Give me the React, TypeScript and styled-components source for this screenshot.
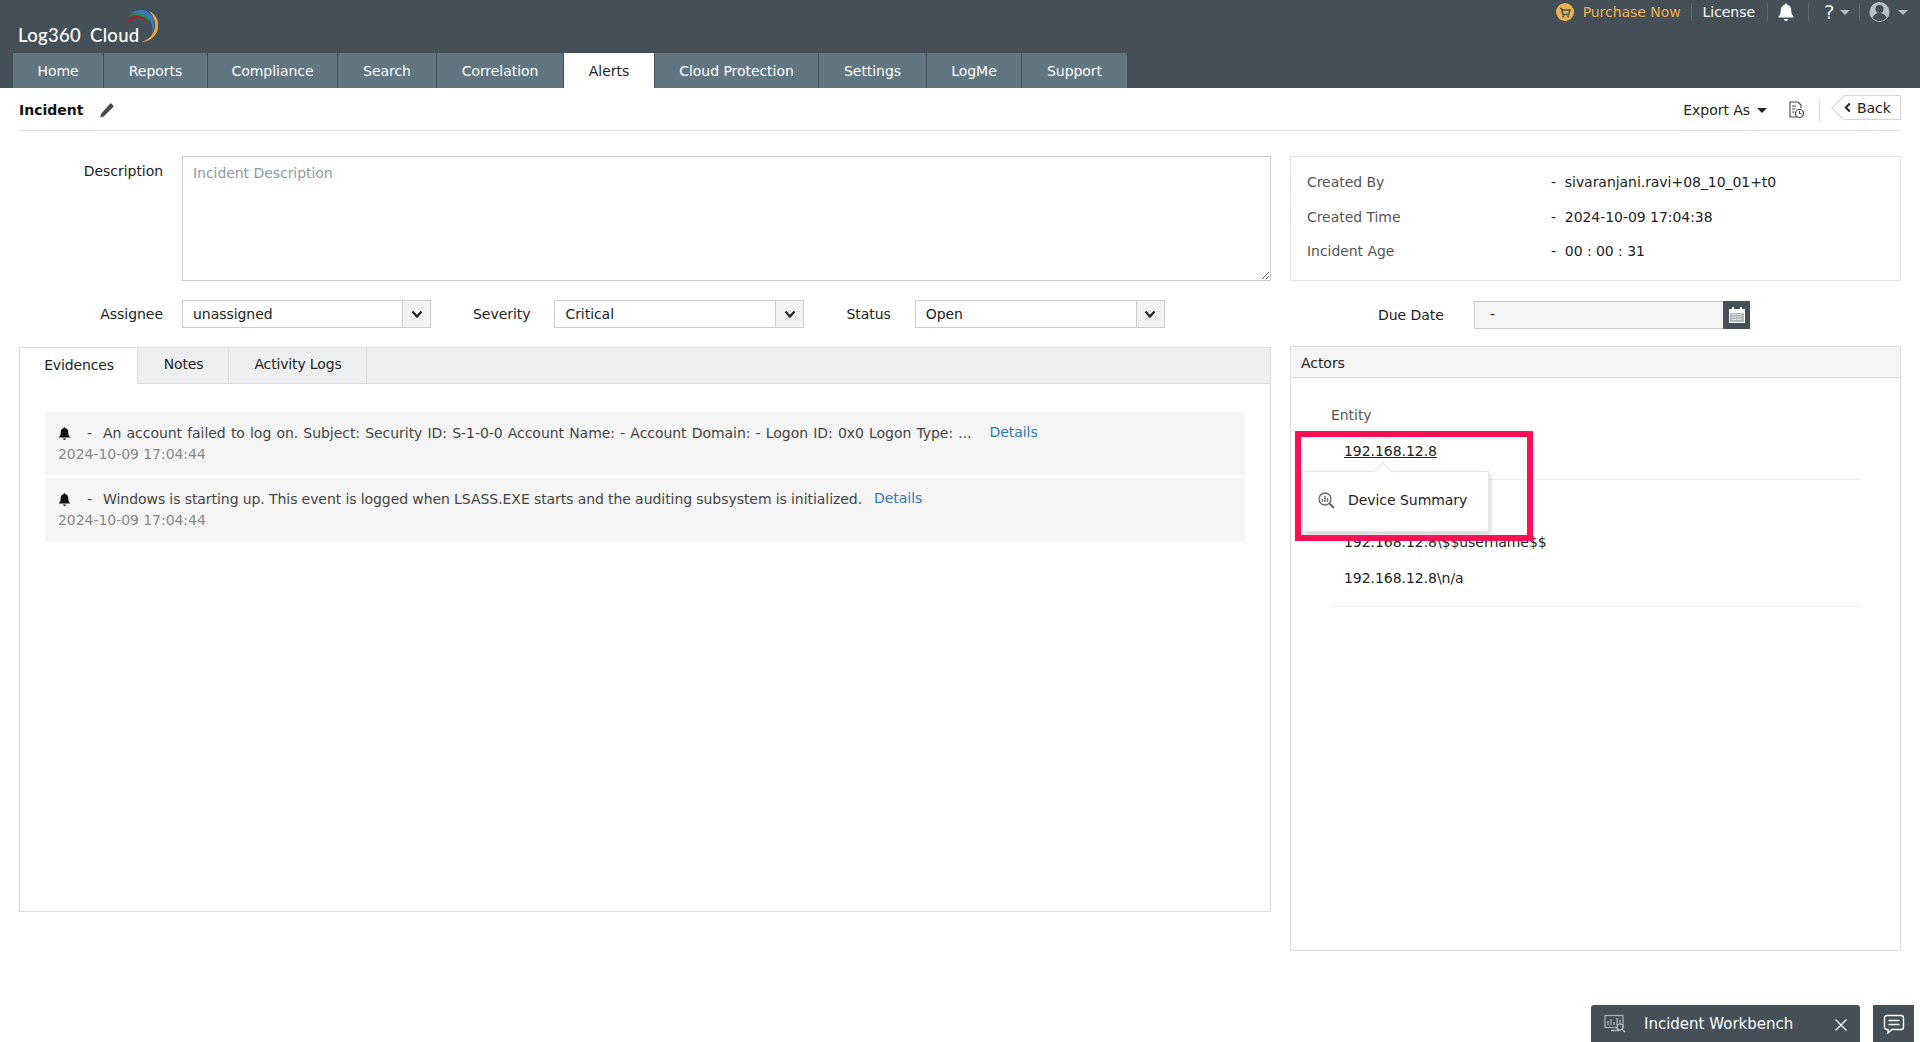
import React from "react";
import styled, { createGlobalStyle } from "styled-components";

const Global = createGlobalStyle`
  html, body { margin: 0; padding: 0; background: #fff; }
  body { font-family: "DejaVu Sans", "Liberation Sans", sans-serif; font-size: 14px; color: #222; letter-spacing: -0.05px; }
  * { box-sizing: border-box; }
`;

const Page = styled.div`
  width: 1920px; height: 1042px; overflow: hidden; position: relative; display: flex; flex-direction: column;
`;
const Header = styled.header`
  height: 88px; background: #444f58; display: flex; flex-direction: column; flex: none;
`;
const TopRow = styled.div`
  height: 53px; display: flex; justify-content: space-between; align-items: flex-start;
`;
const Logo = styled.div`
  display: flex; align-items: flex-start; padding: 8px 0 0 18px;
`;
const LogoText = styled.span`
  font-family: "Lato", "Open Sans", sans-serif; font-size: 18.5px; font-weight: 500; color: #fff; margin-top: 16px; word-spacing: 4px; letter-spacing: 0.3px; white-space: nowrap;
`;
const LogoMark = styled.svg`
  width: 36px; height: 36px; margin-left: -16px; flex: none;
`;
const Tools = styled.div`
  display: flex; align-items: center; height: 24px; padding-right: 12px; color: #fff;
`;
const PurchaseIcon = styled.svg`width: 18px; height: 18px; margin-right: 9px; flex: none;`;
const Purchase = styled.span`color: #eeb04b;`;
const ToolSep = styled.span<{ $m?: number }>`width: 1px; height: 18px; background: #5c6872; margin: 0 ${p => p.$m ?? 12}px;`;
const ToolText = styled.span`color: #fff;`;
const WhiteIcon = styled.svg`width: 18px; height: 20px; flex: none; margin-left: -2px;`;
const Help = styled.span`color: #e6e8ea; font-size: 20px; line-height: 20px; width: 14px; margin-left: 2px;`;
const SmallCaret = styled.span<{ $ml?: number }>`
  width: 0; height: 0; border-left: 5px solid transparent; border-right: 5px solid transparent; border-top: 5px solid #b5bbc0; margin-left: ${p => p.$ml ?? 4}px;
`;
const Avatar = styled.svg`width: 21px; height: 22px; flex: none;`;

const TabBar = styled.nav`
  display: flex; height: 35px; padding-left: 13px; gap: 1px;
`;
const Tab = styled.div<{ $w: number; $active?: boolean }>`
  height: 35px; width: ${p => p.$w}px; display: flex; align-items: center; justify-content: center;
  background: ${p => (p.$active ? "#fff" : "#627682")}; color: ${p => (p.$active ? "#222" : "#fff")};
`;

const Main = styled.main`
  padding: 0 19px; flex: 1; display: flex; flex-direction: column;
`;
const TitleBar = styled.div`
  height: 43px; border-bottom: 1px solid #e2e2e2; display: flex; align-items: center; justify-content: space-between; flex: none; padding-top: 1px;
`;
const TitleLeft = styled.div`display: flex; align-items: center; gap: 16px; padding-top: 1px;`;
const Title = styled.h1`margin: 0; font-size: 14px; font-weight: 700; color: #111; letter-spacing: 0;`;
const PencilIcon = styled.svg`width: 16px; height: 16px;`;
const TitleRight = styled.div`display: flex; align-items: center;`;
const Export = styled.span`color: #222;`;
const ExportCaret = styled.span`
  width: 0; height: 0; border-left: 5px solid transparent; border-right: 5px solid transparent; border-top: 5px solid #222; margin: 2px 0 0 7px;
`;
const ScheduleIcon = styled.svg`width: 17px; height: 18px; margin-left: 21px;`;
const RightSep = styled.span`width: 1px; height: 24px; background: #ddd; margin: 0 23px 0 14px;`;
const BackButton = styled.div`
  width: 58px; height: 25px; position: relative; border: 1px solid #d6d6d6; border-left: none; display: flex; align-items: center; gap: 5px;
  padding-left: 1px; color: #222; margin-top: -4px;
  &::before {
    content: ""; position: absolute; left: -8px; top: 3px; width: 17px; height: 17px; background: #fff; border-left: 1px solid #d6d6d6; border-bottom: 1px solid #d6d6d6; transform: rotate(45deg);
  }
  & > * { position: relative; }
`;
const BackChevron = styled.svg`width: 8px; height: 11px;`;

const Content = styled.div`
  display: grid; grid-template-columns: 1252px 611px; column-gap: 19px; padding-top: 25px; align-items: start;
`;
const LeftStack = styled.div`display: flex; flex-direction: column;`;
const RightStack = styled.div`display: flex; flex-direction: column;`;
const FormRow = styled.div`display: flex; gap: 19px;`;
const FieldLabel = styled.label<{ $w: number; $lh?: number }>`
  color: #222; text-align: right; flex: none; width: ${p => p.$w}px; line-height: ${p => p.$lh ?? 28}px;
`;
const Area = styled.textarea`
  flex: 1; height: 125px; border: 1px solid #ccc; padding: 8px 10px; margin: 0; outline: none; font: inherit; letter-spacing: inherit; color: #222; border-radius: 0;
  &::placeholder { color: #8b9da3; opacity: 1; }
`;
const SelectRow = styled.div`display: flex; align-items: center; margin-top: 19px; height: 28px;`;
const SelectBox = styled.div<{ $w: number; $ml: number }>`
  width: ${p => p.$w}px; height: 28px; border: 1px solid #ccc; display: flex; align-items: center; justify-content: space-between; margin-left: ${p => p.$ml}px; flex: none;
`;
const SelectValue = styled.span`padding-left: 10px; color: #222;`;
const SelectArrow = styled.span`
  width: 28px; height: 100%; background: #f3f3f3; border-left: 1px solid #ccc; display: flex; align-items: center; justify-content: center;
`;
const ChevronIcon = styled.svg`width: 12px; height: 9px;`;
const FieldName = styled.span<{ $ml: number }>`margin-left: ${p => p.$ml}px; color: #222; flex: none;`;

const TabPanel = styled.section`
  margin-top: 19px; height: 565px; border: 1px solid #dcdcdc; display: flex; flex-direction: column;
`;
const PanelTabs = styled.div`
  height: 36px; background: #eeeff1; display: flex; flex: none; border-bottom: 1px solid #dcdcdc;
`;
const PanelTab = styled.div<{ $w: number; $active?: boolean }>`
  width: ${p => p.$w}px; display: flex; align-items: center; justify-content: center; color: #222; padding: 0 0 3px 1px; border-right: 1px solid #dcdcdc; letter-spacing: -0.15px;
  ${p => (p.$active ? "background:#fff; height:36px;" : "")}
`;
const PanelBody = styled.div`
  padding: 28px 25px 0; display: flex; flex-direction: column; gap: 3px;
`;
const EvRow = styled.div`
  height: 63px; background: #f5f5f5; padding: 13px 13px 0; display: flex; flex-direction: column; gap: 5px;
`;
const EvLine = styled.div<{ $ws?: number }>`display: flex; align-items: center; height: 16px; color: #444; white-space: pre; word-spacing: ${p => p.$ws ?? 0}px;`;
const BellIcon = styled.svg`width: 13px; height: 15px; flex: none;`;
const Dash = styled.span`margin: 0 11px 0 16px; color: #444;`;
const DetailsLink = styled.a<{ $ml: number }>`color: #2f79b9; margin-left: ${p => p.$ml}px; position: relative; top: -1px;`;
const EvDate = styled.div`color: #888; height: 16px; line-height: 16px;`;

const InfoBox = styled.div`
  height: 125px; border: 1px solid #e4e4e4; padding: 8px 16px 0; display: flex; flex-direction: column;
`;
const InfoRow = styled.div`display: grid; grid-template-columns: 244px 1fr; height: 34.5px; align-items: center;`;
const InfoKey = styled.span`color: #555;`;
const InfoVal = styled.span`color: #222;`;
const DueRow = styled.div`display: flex; align-items: center; margin-top: 20px; height: 28px;`;
const DueLabel = styled.span`margin-left: 88px; width: 96px; flex: none;`;
const DueInput = styled.div`
  width: 249px; height: 28px; background: #f5f5f5; border: 1px solid #ccc; border-right: none; padding-left: 15px; line-height: 24px; color: #222;
`;
const CalButton = styled.div`
  width: 27px; height: 28px; background: #444f58; display: flex; align-items: center; justify-content: center;
`;
const CalIcon = styled.svg`width: 18px; height: 18px;`;

const ActorsPanel = styled.section`
  margin-top: 17px; height: 605px; border: 1px solid #dcdcdc; position: relative;
`;
const ActorsHead = styled.div`
  height: 31px; background: #f5f5f5; border-bottom: 1px solid #dcdcdc; padding-left: 10px; line-height: 32px; color: #222;
`;
const ActorsBody = styled.div`padding: 27px 40px 0 41px;`;
const EntityHead = styled.div`color: #555; height: 20px; line-height: 20px; margin-left: -1px;`;
const EntityGroup = styled.div<{ $h: number; $pt: number }>`
  border-bottom: 1px solid #eee; padding-left: 12px; height: ${p => p.$h}px; padding-top: ${p => p.$pt}px; display: flex; flex-direction: column; gap: 16px;
`;
const EntityItem = styled.div<{ $link?: boolean }>`height: 20px; line-height: 20px; color: #222; ${p => (p.$link ? "text-decoration: underline;" : "")}`;
const Popup = styled.div`
  position: absolute; left: 11px; top: 124px; width: 187px; height: 61px; background: #fff; border: 1px solid #e8e8e8; box-shadow: 2px 3px 5px rgba(0,0,0,.16), -2px 0 5px rgba(0,0,0,.05);
  display: flex; align-items: center; padding: 0 0 3px 15px; gap: 13px; color: #222;
  &::before {
    content: ""; position: absolute; left: 73px; top: -7px; width: 13px; height: 13px; background: #fff; border-left: 1px solid #e4e4e4; border-top: 1px solid #e4e4e4; transform: rotate(45deg);
  }
`;
const SummaryIcon = styled.svg`width: 17px; height: 17px; flex: none;`;
const RedBox = styled.div`
  position: absolute; left: 4px; top: 84px; width: 238px; height: 110px; border: 6px solid #ff0f55; pointer-events: none;
`;

const Workbench = styled.div`
  position: absolute; left: 1591px; bottom: 0; width: 269px; height: 37px; background: #444f58; border-radius: 3px 3px 0 0; display: flex; align-items: center; padding-left: 13px; color: #fff; font-size: 15px; letter-spacing: 0;
`;
const WorkIcon = styled.svg`width: 22px; height: 19px; flex: none; margin-right: 18px;`;
const CloseIcon = styled.svg`width: 14px; height: 14px; position: absolute; right: 12px; top: 13px;`;
const ChatButton = styled.div`
  position: absolute; left: 1873px; bottom: 0; width: 41px; height: 37px; background: #444f58; display: flex; align-items: center; justify-content: center;
`;
const ChatIcon = styled.svg`width: 22px; height: 22px;`;

const tabs: [string, number][] = [
  ["Home", 90], ["Reports", 103], ["Compliance", 129], ["Search", 98], ["Correlation", 126], ["Alerts", 90],
  ["Cloud Protection", 163], ["Settings", 107], ["LogMe", 94], ["Support", 105],
];

const Chevron = () => (
  <ChevronIcon viewBox="0 0 12 9"><path d="M1.5 1.5 6 6.5l4.5-5" fill="none" stroke="#222" strokeWidth="2.2" /></ChevronIcon>
);
const Bell = ({ c = "#111" }: { c?: string }) => (
  <path fill={c} d="M9 1a1.3 1.3 0 0 1 1.3 1.3c3 .7 4 3 4 6 0 3 .8 4.6 2.2 5.7v1H1.5v-1C2.9 12.9 3.7 11.3 3.7 8.3c0-3 1-5.3 4-6A1.3 1.3 0 0 1 9 1zM7 16.5h4a2 2 0 0 1-4 0z" />
);
const EvBell = () => <BellIcon viewBox="0 0 18 19"><Bell /></BellIcon>;

export default function App() {
  return (
    <Page>
      <Global />
      <Header>
        <TopRow>
          <Logo>
            <LogoText>Log360 Cloud</LogoText>
            <LogoMark viewBox="0 0 36 36">
              <path d="M1 17C4 9 10 7 15 8c4 1 7 4 9 8-3-4-6-6-10-6C9 10 5 13 1 17z" fill="#a3242f" />
              <path d="M4 9C9 3 16 3 21 6c3 2 5 5 6 9-3-4-6-6-10-7-5-1-9-1-13 1z" fill="#2f8a4a" />
              <path d="M7 5c6-4 14-4 19 0 5 4 6 13 2 20 1-6 0-11-3-15C21 6 14 4 7 5z" fill="#3c78c4" />
              <path d="M25 3c7 3 10 10 9 17-1 8-9 14-17 14 8-2 13-8 14-15 1-6-2-12-6-16z" fill="#e9a93b" />
            </LogoMark>
          </Logo>
          <Tools>
            <PurchaseIcon viewBox="0 0 18 18">
              <circle cx="9" cy="9" r="9" fill="#eeb04b" />
              <path d="M4 5.5h1.6l1.2 6h6l1.2-4.5H6" fill="none" stroke="#444f58" strokeWidth="1.4" />
              <circle cx="7.4" cy="13.4" r="1" fill="#444f58" /><circle cx="12.2" cy="13.4" r="1" fill="#444f58" />
            </PurchaseIcon>
            <Purchase>Purchase Now</Purchase>
            <ToolSep $m={10.5} />
            <ToolText>License</ToolText>
            <ToolSep $m={11.5} />
            <WhiteIcon viewBox="0 0 18 19"><Bell c="#fff" /></WhiteIcon>
            <ToolSep $m={13} />
            <Help>?</Help>
            <SmallCaret $ml={2} />
            <ToolSep $m={9} />
            <Avatar viewBox="0 0 21 22">
              <circle cx="10.5" cy="11" r="10" fill="#b9bec3" />
              <circle cx="10.5" cy="8" r="4" fill="#444f58" />
              <path d="M3.5 17c1-3.5 4-5 7-5s6 1.5 7 5c-2 2-4.3 3-7 3s-5-1-7-3z" fill="#444f58" />
            </Avatar>
            <SmallCaret $ml={8} />
          </Tools>
        </TopRow>
        <TabBar>
          {tabs.map(([t, w]) => <Tab key={t} $w={w} $active={t === "Alerts"}>{t}</Tab>)}
        </TabBar>
      </Header>
      <Main>
        <TitleBar>
          <TitleLeft>
            <Title>Incident</Title>
            <PencilIcon viewBox="0 0 15 15"><path d="M11 1l3 3-9.5 9.500L1 14.500l1-3.500z" fill="#4a4a4a" /></PencilIcon>
          </TitleLeft>
          <TitleRight>
            <Export>Export As</Export>
            <ExportCaret />
            <ScheduleIcon viewBox="0 0 17 18">
              <path d="M9 16H2V1h8l3 3v3" fill="none" stroke="#444" strokeWidth="1.1" />
              <path d="M4 5h4M4 8h3M4 11h2" stroke="#444" strokeWidth="1.1" />
              <circle cx="11.5" cy="12.5" r="4" fill="#fff" stroke="#444" strokeWidth="1.2" />
              <path d="M11.5 10v2.700h2.200" fill="none" stroke="#444" />
            </ScheduleIcon>
            <RightSep />
            <BackButton>
              <BackChevron viewBox="0 0 9 12"><path d="M6.5 1.5 2 6l4.500 4.500" fill="none" stroke="#222" strokeWidth="2.2" /></BackChevron>
              <span>Back</span>
            </BackButton>
          </TitleRight>
        </TitleBar>
        <Content>
          <LeftStack>
            <FormRow>
              <FieldLabel $w={144} $lh={31}>Description</FieldLabel>
              <Area placeholder="Incident Description" />
            </FormRow>
            <SelectRow>
              <FieldLabel $w={144}>Assignee</FieldLabel>
              <SelectBox $w={249} $ml={19}><SelectValue>unassigned</SelectValue><SelectArrow><Chevron /></SelectArrow></SelectBox>
              <FieldName $ml={42}>Severity</FieldName>
              <SelectBox $w={250} $ml={24}><SelectValue>Critical</SelectValue><SelectArrow><Chevron /></SelectArrow></SelectBox>
              <FieldName $ml={42}>Status</FieldName>
              <SelectBox $w={250} $ml={24}><SelectValue>Open</SelectValue><SelectArrow><Chevron /></SelectArrow></SelectBox>
            </SelectRow>
            <TabPanel>
              <PanelTabs>
                <PanelTab $active $w={118}>Evidences</PanelTab>
                <PanelTab $w={91}>Notes</PanelTab>
                <PanelTab $w={138}>Activity Logs</PanelTab>
              </PanelTabs>
              <PanelBody>
                <EvRow>
                  <EvLine $ws={0.8}>
                    <EvBell /><Dash>-</Dash>
                    An account failed to log on. Subject: Security ID: S-1-0-0 Account Name: - Account Domain: - Logon ID: 0x0 Logon Type: ...
                    <DetailsLink $ml={18}>Details</DetailsLink>
                  </EvLine>
                  <EvDate>2024-10-09 17:04:44</EvDate>
                </EvRow>
                <EvRow>
                  <EvLine $ws={-0.2}>
                    <EvBell /><Dash>-</Dash>
                    Windows is starting up. This event is logged when LSASS.EXE starts and the auditing subsystem is initialized.
                    <DetailsLink $ml={12}>Details</DetailsLink>
                  </EvLine>
                  <EvDate>2024-10-09 17:04:44</EvDate>
                </EvRow>
              </PanelBody>
            </TabPanel>
          </LeftStack>
          <RightStack>
            <InfoBox>
              <InfoRow><InfoKey>Created By</InfoKey><InfoVal>-&nbsp; sivaranjani.ravi+08_10_01+t0</InfoVal></InfoRow>
              <InfoRow><InfoKey>Created Time</InfoKey><InfoVal>-&nbsp; 2024-10-09 17:04:38</InfoVal></InfoRow>
              <InfoRow><InfoKey>Incident Age</InfoKey><InfoVal>-&nbsp; 00 : 00 : 31</InfoVal></InfoRow>
            </InfoBox>
            <DueRow>
              <DueLabel>Due Date</DueLabel>
              <DueInput>-</DueInput>
              <CalButton>
                <CalIcon viewBox="0 0 18 18">
                  <rect x="1" y="3" width="16" height="14" fill="#fff" />
                  <rect x="2" y="7" width="14" height="9" fill="#aeb6bc" />
                  <path d="M4 8.5h10M4 11h10M4 13.5h10" stroke="#fff" strokeWidth="1" strokeDasharray="1.5 1" />
                  <rect x="4" y="1" width="2" height="4" fill="#fff" /><rect x="12" y="1" width="2" height="4" fill="#fff" />
                </CalIcon>
              </CalButton>
            </DueRow>
            <ActorsPanel>
              <ActorsHead>Actors</ActorsHead>
              <ActorsBody>
                <EntityHead>Entity</EntityHead>
                <EntityGroup $h={55} $pt={16}>
                  <EntityItem $link>192.168.12.8</EntityItem>
                </EntityGroup>
                <EntityGroup $h={127} $pt={52}>
                  <EntityItem>192.168.12.8\$$username$$</EntityItem>
                  <EntityItem>192.168.12.8\n/a</EntityItem>
                </EntityGroup>
              </ActorsBody>
              <Popup>
                <SummaryIcon viewBox="0 0 17 17">
                  <circle cx="7" cy="7" r="6" fill="none" stroke="#666" strokeWidth="1.3" />
                  <path d="M4.5 10V7M7 10V4M9.5 10V6" stroke="#777" strokeWidth="1.5" />
                  <path d="M11.5 11.5 16 16" stroke="#555" strokeWidth="1.8" />
                </SummaryIcon>
                Device Summary
              </Popup>
              <RedBox />
            </ActorsPanel>
          </RightStack>
        </Content>
      </Main>
      <Workbench>
        <WorkIcon viewBox="0 0 22 19">
          <rect x="1" y="1.5" width="18" height="12" fill="none" stroke="#aab2b8" strokeWidth="1.2" />
          <path d="M4 11V7M7 11V5M10 11V8M13 11V4M16 11V6M7 16.5h8" stroke="#aab2b8" strokeWidth="1.3" />
          <circle cx="16" cy="13" r="3" fill="#444f58" stroke="#c5cbd0" strokeWidth="1.1" />
          <path d="M18 15.2 21 18" stroke="#c5cbd0" strokeWidth="1.2" />
        </WorkIcon>
        Incident Workbench
        <CloseIcon viewBox="0 0 14 14"><path d="M1.5 1.5l11 11M12.5 1.5l-11 11" stroke="#fff" strokeWidth="1.3" /></CloseIcon>
      </Workbench>
      <ChatButton>
        <ChatIcon viewBox="0 0 22 22">
          <path d="M4 2.5h14a2.500 2.500 0 0 1 2.500 2.500v9a2.500 2.500 0 0 1-2.500 2.500H9l-4 3.500v-3.500H4A2.500 2.500 0 0 1 1.500 14V5A2.500 2.500 0 0 1 4 2.500z" fill="none" stroke="#fff" strokeWidth="1.4" />
          <path d="M5.5 7.500h11M5.5 11.500h11" stroke="#fff" strokeWidth="1.4" />
        </ChatIcon>
      </ChatButton>
    </Page>
  );
}
